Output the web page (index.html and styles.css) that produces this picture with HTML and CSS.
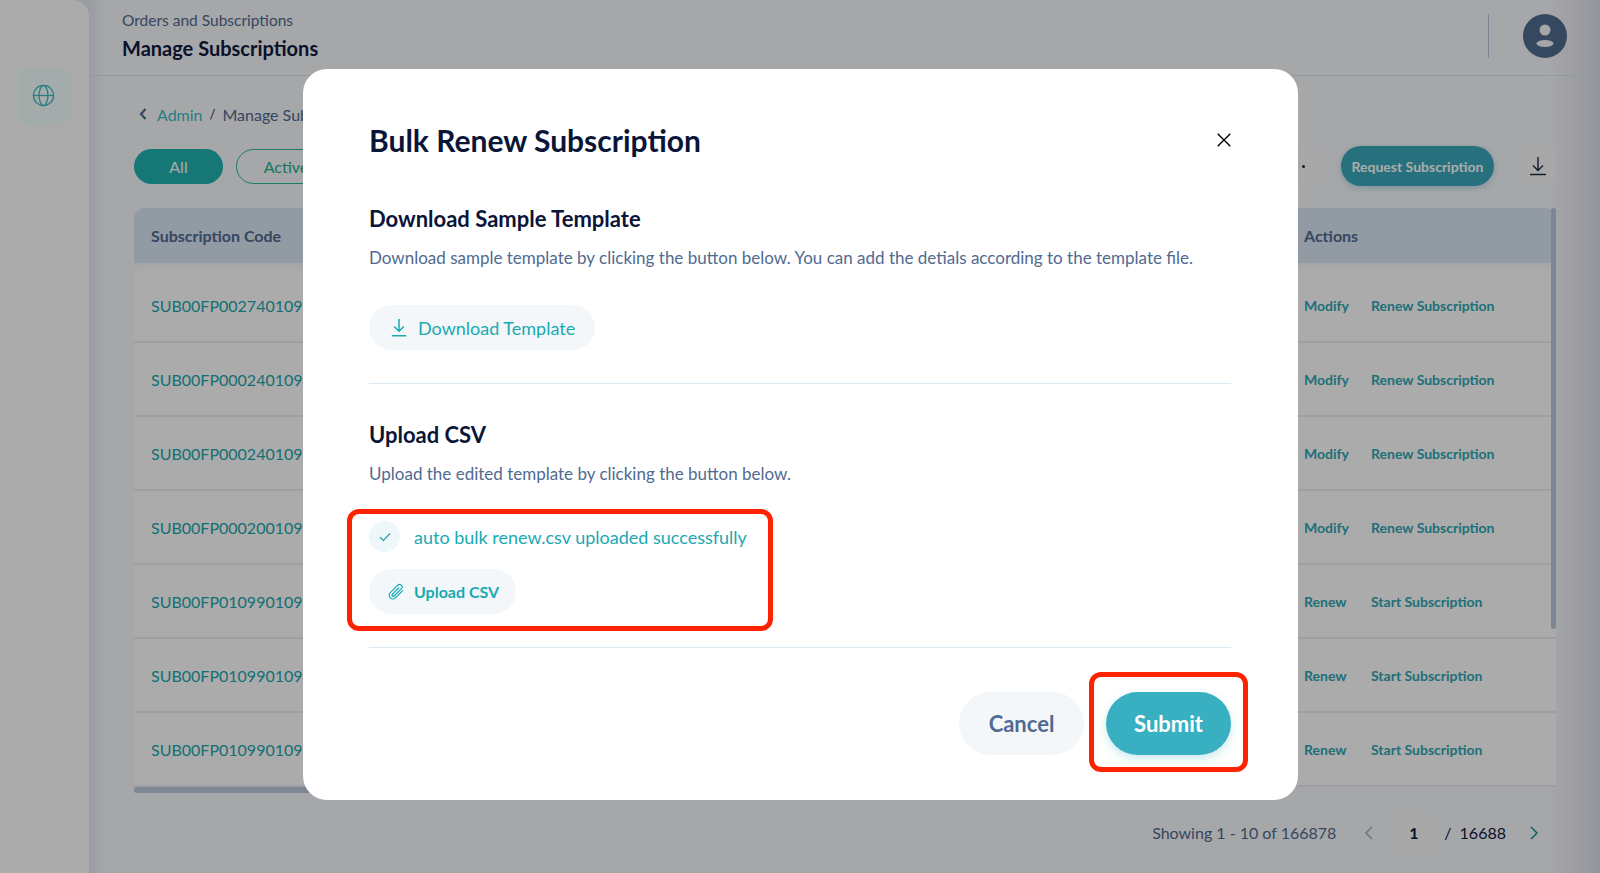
FILE: index.html
```html
<!DOCTYPE html>
<html lang="en">
<head>
<meta charset="utf-8">
<title>Manage Subscriptions</title>
<link rel="stylesheet" href="styles.css">
</head>
<body>
<div class="page">
  <aside class="sidebar">
    <div class="side-tile">
      <svg class="globe" viewBox="0 0 24 24" fill="none" stroke="currentColor" stroke-width="1.3"><circle cx="12" cy="12" r="10.5"/><ellipse cx="12" cy="12" rx="4.6" ry="10.5"/><path d="M1.5 12h21"/></svg>
    </div>
  </aside>
  <main class="main">
    <header class="topbar">
      <div class="titles">
        <div class="crumb-title">Orders and Subscriptions</div>
        <div class="page-title">Manage Subscriptions</div>
      </div>
      <div class="top-right">
        <span class="vline"></span>
        <svg class="avatar" viewBox="0 0 44 44"><circle cx="22" cy="22" r="22" fill="#516a8f"/><circle cx="22" cy="16" r="5.5" fill="#f7f7f7"/><ellipse cx="22" cy="29.5" rx="8.5" ry="3.5" fill="#f7f7f7"/></svg>
      </div>
    </header>
    <section class="content">
      <nav class="breadcrumb">
        <svg class="back" viewBox="0 0 10 14" fill="none" stroke="currentColor" stroke-width="2.2"><path d="M7.5 2 3 7l4.5 5"/></svg>
        <span class="link">Admin</span><span class="sep">/</span><span>Manage Subscriptions</span>
      </nav>
      <div class="toolbar">
        <span class="pill pill-on">All</span>
        <span class="pill pill-off">Active</span>
        <span class="spacer"></span>
        <span class="tile tile-dots"><i class="dot"></i></span>
        <span class="request">Request Subscription</span>
        <span class="tile">
          <svg class="dl" viewBox="0 0 18 20" fill="none" stroke="#1d2a4a" stroke-width="1.4"><path d="M9 1v13M4 9.5l5 5 5-5M1 18.5h16"/></svg>
        </span>
      </div>
      <div class="table">
        <div class="thead"><span class="c-code">Subscription Code</span><span class="c-act">Actions</span></div>
        <div class="row"><a class="c-code">SUB00FP0027401099</a><div class="c-act"><a class="a1">Modify</a><a>Renew Subscription</a></div></div>
        <div class="row"><a class="c-code">SUB00FP0002401099</a><div class="c-act"><a class="a1">Modify</a><a>Renew Subscription</a></div></div>
        <div class="row"><a class="c-code">SUB00FP0002401099</a><div class="c-act"><a class="a1">Modify</a><a>Renew Subscription</a></div></div>
        <div class="row"><a class="c-code">SUB00FP0002001099</a><div class="c-act"><a class="a1">Modify</a><a>Renew Subscription</a></div></div>
        <div class="row"><a class="c-code">SUB00FP0109901099</a><div class="c-act"><a class="a1">Renew</a><a>Start Subscription</a></div></div>
        <div class="row"><a class="c-code">SUB00FP0109901099</a><div class="c-act"><a class="a1">Renew</a><a>Start Subscription</a></div></div>
        <div class="row"><a class="c-code">SUB00FP0109901099</a><div class="c-act"><a class="a1">Renew</a><a>Start Subscription</a></div></div>
        <div class="hscroll"></div>
        <div class="vscroll"></div>
      </div>
      <div class="pager">
        <span class="showing">Showing 1 - 10 of 166878</span>
        <svg class="chev chev-off" viewBox="0 0 10 16" fill="none" stroke="currentColor" stroke-width="1.5"><path d="M8 2 2 8l6 6"/></svg>
        <span class="page-no">1</span>
        <span class="page-sep">/</span>
        <span class="page-total">16688</span>
        <svg class="chev chev-on" viewBox="0 0 10 16" fill="none" stroke="currentColor" stroke-width="1.5"><path d="m2 2 6 6-6 6"/></svg>
      </div>
    </section>
  </main>
</div>

<div class="backdrop"></div>

<div class="modal">
  <div class="modal-head">
    <h1>Bulk Renew Subscription</h1>
    <svg class="close" viewBox="0 0 14 14" fill="none" stroke="#000" stroke-width="1.4"><path d="M.7.7l12.6 12.6M13.3.7.7 13.3"/></svg>
  </div>
  <h2 class="h-first">Download Sample Template</h2>
  <p>Download sample template by clicking the button below. You can add the detials according to the template file.</p>
  <button class="soft dl-btn">
    <svg class="dl-icon" viewBox="0 0 16 19" fill="none" stroke="currentColor" stroke-width="1.5"><path d="M8 1v12M3.2 8.5 8 13.3l4.8-4.8M.8 17.8h14.4"/></svg>
    Download Template
  </button>
  <hr class="rule-a">
  <h2>Upload CSV</h2>
  <p>Upload the edited template by clicking the button below.</p>
  <div class="status">
    <span class="check"><svg viewBox="0 0 12 10" fill="none" stroke="currentColor" stroke-width="1.2"><path d="m1 5.2 3.4 3.3L11 1.5"/></svg></span>
    <span>auto bulk renew.csv uploaded successfully</span>
  </div>
  <button class="soft up-btn">
    <svg class="clip" viewBox="0 0 18 18" fill="none" stroke="currentColor" stroke-width="1.2" stroke-linecap="round"><path d="M15.6 7.6 8.4 14.8a3.6 3.6 0 0 1-5.1-5.1l7.5-7.5a2.5 2.5 0 0 1 3.6 3.5l-7.3 7.3a1.2 1.2 0 0 1-1.8-1.7L11.500 5"/></svg>
    Upload CSV
  </button>
  <hr class="rule-b">
  <div class="actions">
    <button class="cancel">Cancel</button>
    <button class="submit">Submit</button>
  </div>
</div>

<div class="mark mark-upload"></div>
<div class="mark mark-submit"></div>
</body>
</html>
```
FILE: styles.css
```css
* { box-sizing: border-box; }
html, body { margin: 0; padding: 0; height: 873px; overflow: hidden; }
body { font-family: "Lato", "Open Sans", sans-serif; color: #516a8f; background: #fff; }

.page { display: flex; height: 873px; width: 1600px; }
.sidebar { width: 89px; flex: none; background: #ffffff; border-top-right-radius: 16px; padding: 68px 18px 0; position: relative; z-index: 1; }
.side-tile { width: 53px; height: 58px; border-radius: 10px; background: #f4ffff; display: flex; align-items: center; justify-content: center; color: #38bcc6; }
.globe { width: 23px; height: 23px; margin-top: -4px; margin-right: 3px; }

.main { flex: 1; display: flex; flex-direction: column; min-width: 0; margin-left: -16px; padding-left: 16px;
  background: linear-gradient(to right, #e4e9f1 0, #e4e9f1 16px, #f8f9fc 32px, #f8f9fc calc(100% - 50px), #dcdfe9 100%); }
.topbar { height: 76px; flex: none; display: flex; justify-content: space-between; padding: 10px 33px 0 33px; border-bottom: 1px solid #dbe5f1; }
.crumb-title { font-size: 15.500px; line-height: 20px; color: #516a8f; }
.page-title { font-size: 20px; line-height: 26px; margin-top: 5px; font-weight: 700; color: #0f1a3f; }
.top-right { display: flex; gap: 34px; padding-top: 4px; }
.vline { width: 1px; height: 44px; background: #b9c7d9; }
.avatar { width: 44px; height: 44px; }

.content { flex: 1; padding: 0 44px 0 45px; min-width: 0; }
.breadcrumb { display: flex; align-items: center; height: 22px; margin-top: 27px; font-size: 16px; }
.back { width: 10px; height: 14px; margin: 0 9px 0 4px; color: #516a8f; }
.link { color: #38bcc6; }
.sep { margin: 0 7px; color: #1d2a4a; font-size: 13px; }
.toolbar { display: flex; align-items: center; height: 40px; margin-top: 21px; }
.pill { height: 35px; border-radius: 18px; display: flex; align-items: center; justify-content: center; font-size: 16px; }
.pill-on { width: 89px; background: #21b3b0; color: #fff; }
.pill-off { width: 100px; margin-left: 13px; border: 1px solid #2db896; color: #1fae8d; }
.spacer { flex: 1; }
.tile { width: 36px; height: 36px; border-radius: 8px; background: #fbfbfb; display: flex; align-items: center; justify-content: center; }
.tile-dots { margin-right: 27px; justify-content: flex-end; padding-right: 9px; }
.dot { width: 3px; height: 3px; border-radius: 50%; background: #1d2a4a; }
.request { width: 153px; height: 40px; margin-right: 26px; border-radius: 20px; background: #3aa9bb; color: #fff; font-size: 14px; font-weight: 700; display: flex; align-items: center; justify-content: center; box-shadow: 0 2px 6px rgba(58,169,187,.35); }
.dl { width: 18px; height: 20px; }

.table { position: relative; margin-top: 22px; height: 585px; width: 1422px; }
.thead { height: 55px; border-radius: 10px 10px 0 0; background: #dae6f5; display: flex; align-items: center; justify-content: space-between; font-size: 16px; font-weight: 700; color: #516a8f; padding-right: 0; }
.row { height: 74px; background: #ffffff; border-bottom: 2px solid #ebeef5; display: flex; align-items: center; justify-content: space-between; }
.thead + .row { margin-top: 6px; border-top-left-radius: 8px; border-top-right-radius: 8px; }
.c-code { padding-left: 17px; font-size: 16px; color: #20a7ad; }
.thead .c-code { color: #516a8f; }
.c-act { width: 252px; font-size: 14px; font-weight: 700; color: #2fa7b4; display: flex; }
.thead .c-act { font-size: 16px; color: #516a8f; padding-left: 0; margin-left: 0; }
.a1 { width: 67px; }
.hscroll { position: absolute; left: 0; bottom: 0; width: 300px; height: 6px; border-radius: 3px; background: #b9c9dc; }
.vscroll { position: absolute; right: 0; top: 0; width: 5px; height: 421px; border-radius: 3px; background: #b9c9dc; }

.pager { display: flex; align-items: center; justify-content: flex-end; height: 35px; margin-top: 22px; width: 1422px; padding-right: 17px; font-size: 16px; }
.showing { color: #516a8f; margin-right: 28px; }
.chev { width: 10px; height: 16px; }
.chev-off { color: #9db0c6; margin-right: 23px; }
.chev-on { color: #1f8fa0; margin-left: 23px; }
.page-no { width: 33px; height: 35px; border-radius: 8px; background: #fbfbfb; color: #0f1a3f; font-weight: 700; display: flex; align-items: center; justify-content: center; }
.page-sep { margin: 0 8px 0 14px; color: #0f1a3f; }
.page-total { color: #0f1a3f; }

.backdrop { position: fixed; inset: 0; background: rgba(0,0,0,.33); z-index: 5; }

.modal { position: absolute; left: 303px; top: 69px; width: 995px; height: 731px; border-radius: 24px; background: #fff; padding: 53px 67px 0 66px; z-index: 6; }
.modal-head { display: flex; align-items: center; justify-content: space-between; height: 36px; }
h1 { margin: 0; font-size: 30px; line-height: 36px; font-weight: 700; color: #0a1538; }
.close { width: 14px; height: 14px; margin-right: 0; }
h2 { margin: 38px 0 0; font-size: 22px; line-height: 26px; font-weight: 700; color: #0a1538; }
.h-first { margin-top: 48px; }
p { margin: 14px 0 0; font-size: 17px; line-height: 24px; color: #516a8f; white-space: nowrap; }
button { font-family: inherit; border: 0; cursor: pointer; }
.soft { display: flex; align-items: center; background: #f3f7fa; border-radius: 23px; color: #1aa9b2; }
.dl-btn { width: 226px; height: 45px; margin-top: 35px; padding: 0 0 0 22px; font-size: 18px; gap: 11px; }
.dl-icon { width: 16px; height: 19px; }
hr { border: 0; height: 1px; background: #dbe9f2; margin: 0; }
.rule-a { margin-top: 33px; }
.status { display: flex; align-items: center; gap: 14px; margin-top: 35px; height: 31px; font-size: 18px; color: #1aa9b2; }
.check { width: 31px; height: 31px; border-radius: 50%; background: #eef7f9; display: flex; align-items: center; justify-content: center; color: #2a9cab; }
.check svg { width: 12px; height: 10px; }
.up-btn { width: 147px; height: 45px; margin-top: 17px; padding: 0 0 0 18px; font-size: 16px; font-weight: 700; gap: 9px; }
.clip { width: 18px; height: 18px; }
.rule-b { margin-top: 33px; }
.actions { display: flex; justify-content: flex-end; gap: 22px; margin-top: 44px; }
.cancel, .submit { width: 125px; height: 63px; border-radius: 32px; font-size: 22px; font-weight: 700; }
.cancel { background: #f3f7fa; color: #516a8f; }
.submit { background: #38b0c1; color: #fff; box-shadow: 0 4px 10px rgba(56,176,193,.25); }

.mark { position: absolute; border: 5px solid #ff2200; border-radius: 12px; z-index: 7; }
.mark-upload { left: 347px; top: 509px; width: 426px; height: 122px; }
.mark-submit { left: 1089px; top: 672px; width: 159px; height: 100px; }
```
